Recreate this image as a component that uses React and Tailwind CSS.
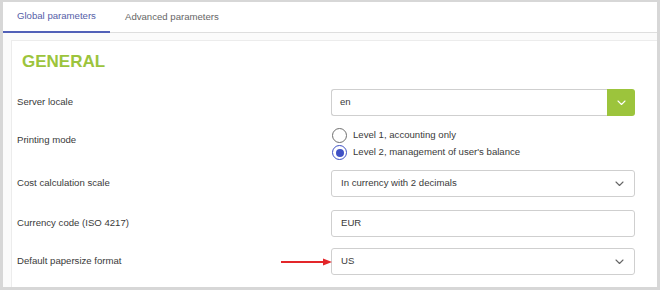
import React from "react";

function Chevron({ color = "#666" }) {
  return (
    <svg width="9" height="6" viewBox="0 0 9 6" fill="none">
      <path d="M1 1l3.5 3.5L8 1" stroke={color} strokeWidth="1.1" strokeLinecap="round" strokeLinejoin="round" />
    </svg>
  );
}

function Radio({ checked, label }) {
  return (
    <div className="flex items-center h-[17px]">
      <span
        className={`w-[15px] h-[15px] rounded-full border flex items-center justify-center bg-white ${
          checked ? "border-[#3f51c5]" : "border-[#6f6f6f]"
        }`}
      >
        {checked && <span className="w-[8px] h-[8px] rounded-full bg-[#3f51c5]" />}
      </span>
      <span className="ml-[6px]">{label}</span>
    </div>
  );
}

function Select({ value }) {
  return (
    <div className="w-[304px] h-[27px] border border-[#cfcfcf] rounded-[3px] bg-white flex items-center justify-between pl-[9px] pr-[10px]">
      <span>{value}</span>
      <Chevron />
    </div>
  );
}

export default function App() {
  return (
    <div
      className="w-[660px] h-[290px] bg-[#d7d7d7] pt-[2px] pl-[3px] pr-[3px] pb-[3px] text-[9.6px] text-[#3a3a3a]"
      style={{ fontFamily: '"Liberation Sans", Arial, sans-serif' }}
    >
      <div className="w-full h-full bg-white flex flex-col overflow-hidden">
        {/* TABS */}
        <div className="h-[31px] flex border-b border-[#dedede] shrink-0">
          <div className="px-[14px] flex items-center text-[#5560a8] border-b-2 border-[#5261b8] mb-[-1px] w-[107px]">
            Global parameters
          </div>
          <div className="px-[15px] flex items-center text-[#666]">Advanced parameters</div>
        </div>

        {/* CONTENT */}
        <div className="flex-1 bg-[#fbfbfb] pl-[8px] pt-[7px]">
          <div className="h-full bg-white border-l border-t border-[#ececec] pt-[12px] pr-[21px]">
            <div className="pl-[10px] text-[17px] leading-none font-bold text-[#9cc43c]">GENERAL</div>

            <div className="pl-[5px] mt-[19px] flex flex-col">
              {/* Server locale */}
              <div className="flex items-center">
                <div className="w-[314px]">Server locale</div>
                <div className="w-[304px] h-[27px] flex">
                  <div className="flex-1 border border-r-0 border-[#cfcfcf] rounded-l-[3px] bg-white flex items-center pl-[8px]">
                    en
                  </div>
                  <div className="w-[28px] bg-[#9cc43c] rounded-r-[3px] flex items-center justify-center">
                    <Chevron color="#fff" />
                  </div>
                </div>
              </div>

              {/* Printing mode */}
              <div className="flex items-start mt-[11px]">
                <div className="w-[314px] mt-[6px]">Printing mode</div>
                <div className="flex flex-col pl-[1px]">
                  <Radio label="Level 1, accounting only" />
                  <Radio checked label="Level 2, management of user's balance" />
                </div>
              </div>

              {/* Cost calculation scale */}
              <div className="flex items-center mt-[9px]">
                <div className="w-[314px]">Cost calculation scale</div>
                <Select value="In currency with 2 decimals" />
              </div>

              {/* Currency code */}
              <div className="flex items-center mt-[13px]">
                <div className="w-[314px]">Currency code (ISO 4217)</div>
                <div className="w-[304px] h-[27px] border border-[#cfcfcf] rounded-[3px] bg-white flex items-center pl-[9px]">
                  EUR
                </div>
              </div>

              {/* Default papersize format */}
              <div className="flex items-center mt-[11px] relative">
                <div className="w-[314px]">Default papersize format</div>
                <Select value="US" />
                <svg
                  className="absolute left-[264px] top-[10px]"
                  width="52"
                  height="8"
                  viewBox="0 0 52 8"
                >
                  <line x1="0" y1="4" x2="44" y2="4" stroke="#e3262a" strokeWidth="2" />
                  <path d="M42 0.5L51 4L42 7.5Z" fill="#e3262a" />
                </svg>
              </div>
            </div>
          </div>
        </div>
      </div>
    </div>
  );
}
